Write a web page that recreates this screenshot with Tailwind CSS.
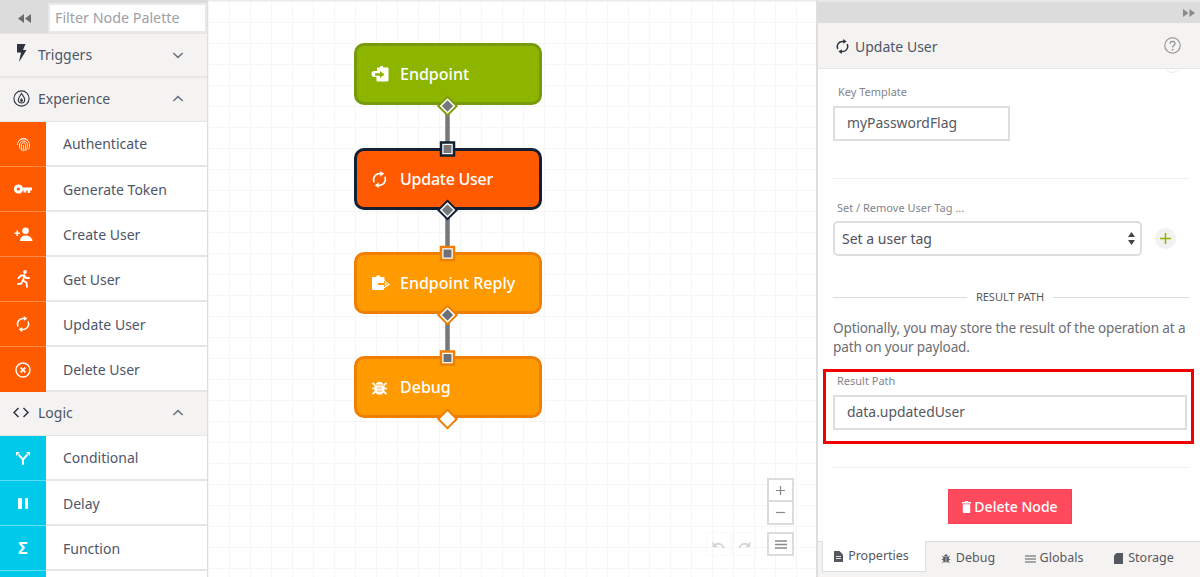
<!DOCTYPE html>
<html>
<head>
<meta charset="utf-8">
<script src="https://cdn.jsdelivr.net/npm/@tailwindcss/browser@4"></script>
</head>
<body class="w-[1200px] h-[577px] overflow-hidden bg-white font-['Noto_Sans','Open_Sans',sans-serif] text-[#4d5668]">
<svg class="hidden">
  <defs>
    <symbol id="sync" viewBox="0 0 20 20"><g fill="none" stroke="currentColor" stroke-width="2" stroke-linecap="round"><path d="M3.400 12.500A6.900 6.900 0 0 1 10 3.200h1.500"/><path d="M16.600 7.500A6.900 6.900 0 0 1 10 16.800H8.500"/></g><path fill="currentColor" d="M11 0 15.500 3.200 11 6.400zM9 13.600 4.500 16.800 9 20z"/></symbol>
    <symbol id="bug" viewBox="0 0 1792 1792"><path fill="currentColor" d="M1696 960q0 26-19 45t-45 19h-224q0 171-67 290l208 209q19 19 19 45t-19 45q-18 19-45 19t-45-19l-198-197q-5 5-15 13t-42 28.5-65 36.5-82 29-97 13v-896h-128v896q-51 0-101.5-13.5t-87-33-66-39-43.5-32.5l-15-14-183 207q-20 21-48 21-24 0-43-16-19-18-20.5-44.5t15.5-46.5l202-227q-58-114-58-274h-224q-26 0-45-19t-19-45 19-45 45-19h224v-294l-173-173q-19-19-19-45t19-45 45-19 45 19l173 173h844l173-173q19-19 45-19t45 19 19 45-19 45l-173 173v294h224q26 0 45 19t19 45zm-480-576h-640q0-133 93.5-226.5t226.5-93.5 226.5 93.5 93.5 226.5z"/></symbol>
    <symbol id="up" viewBox="0 0 14 8"><path d="M1.500 7 7 1.800 12.500 7" fill="none" stroke="currentColor" stroke-width="1.700"/></symbol>
    <symbol id="undo" viewBox="0 0 14 10"><path d="M13 9C11.500 5 7.500 3 3.500 5" fill="none" stroke="currentColor" stroke-width="2"/><path fill="currentColor" d="M0 1.500 6.500 8H.5z"/></symbol>
  </defs>
</svg>
<div class="flex h-[577px] w-[1200px]">
  <!-- Palette -->
  <aside class="w-[208px] shrink-0 h-full overflow-hidden border-r border-[#dedede] bg-white flex flex-col">
    <div class="h-[34px] shrink-0 flex bg-[#dcdcdc] pt-[3px] border-b border-[#e4e4e4]">
      <div class="w-[48px] flex items-center justify-center text-[#6b6b6b]">
        <svg width="13" height="9" viewBox="0 0 13 9"><path fill="currentColor" d="M6 0v9L0 4.500zM13 0v9L7 4.500z"/></svg>
      </div>
      <div class="w-[159px] h-[30px] bg-white border-2 border-[#e9e9e9] flex items-center pl-[5px] text-[14.3px] text-[#a0a0a4]">Filter Node Palette</div>
    </div>
    <div class="h-[44px] shrink-0 bg-[#f4f3f2] border-b-2 border-[#e6e6e6] flex items-center pl-[16px] pr-[23px]">
      <svg width="11" height="18" viewBox="0 0 11 18" class="text-[#2d3340] mr-[11px] -mt-[4px]"><path fill="currentColor" d="M1 0h8.500L7 6h3.500L3 18l2-9.500H1z"/></svg>
      <span class="text-[14px] flex-1 -mt-[1px]">Triggers</span>
      <svg width="12" height="7" viewBox="0 0 14 8" class="rotate-180 text-[#6a7280]"><use href="#up"/></svg>
    </div>
    <div class="h-[44px] shrink-0 bg-[#f4f3f2] border-b border-[#e6e6e6] flex items-center pl-[13px] pr-[23px] pb-[2px]">
      <svg width="17" height="17" viewBox="0 0 17 17" class="text-[#2d3340] mr-[8px]"><circle cx="8.500" cy="8.500" r="7.600" fill="none" stroke="currentColor" stroke-width="1.100"/><path fill="none" stroke="currentColor" stroke-width="1.100" d="M8.500 3.500C10 6 11.700 7.500 11.700 9.800a3.200 3.200 0 0 1-6.400 0C5.300 7.500 7.300 6 8.500 3.500z"/><path fill="currentColor" d="M8.500 8c.8 1 1.400 1.700 1.400 2.500a1.400 1.400 0 0 1-2.800 0C7.100 9.700 7.800 9 8.500 8z"/></svg>
      <span class="text-[14px] flex-1">Experience</span>
      <svg width="12" height="7" viewBox="0 0 14 8" class="text-[#6a7280]"><use href="#up"/></svg>
    </div>
    <!-- rows -->
    <div class="h-[45px] shrink-0 flex">
      <div class="w-[46px] bg-[#ff5a00] border-b border-[#ff8c4d] flex items-center justify-center text-[#ffe4d2]">
        <svg width="15" height="16" viewBox="0 0 15 16" fill="none" stroke="currentColor" stroke-width="1"><path d="M2.500 5.500a5.500 5.500 0 0 1 10 0M1.500 9c0-3.500 2.500-6 6-6s6 2.500 6 6c0 2-.2 3-.8 4.300M4 12.800C3.500 11.500 3.500 10 3.500 9c0-2.300 1.700-4 4-4s4 1.700 4 4c0 2-.3 3.800-1.200 5.500M5.800 14.600c-.5-1.500-.5-3.600-.5-5.600 0-1.200 1-2.200 2.200-2.200S9.700 7.800 9.700 9c0 2-.3 4-1 6M7.500 9c0 2.200-.1 4.200-.5 6.300"/></svg>
      </div>
      <div class="flex-1 flex items-center pl-[17px] text-[14px] border-b-2 border-[#e6e6e6]">Authenticate</div>
    </div>
    <div class="h-[45px] shrink-0 flex">
      <div class="w-[46px] bg-[#ff5a00] border-b border-[#ff8c4d] flex items-center justify-center text-white">
        <svg width="18" height="10" viewBox="0 0 18 10"><path fill="currentColor" fill-rule="evenodd" d="M4.500.5A4.500 4.500 0 0 1 8.800 3.600H18v2.800h-1.800V9h-2.600V6.400h-1.400V8.500H9.600V6.400h-.8A4.500 4.500 0 1 1 4.500.5zm-.2 2.900a1.600 1.600 0 1 0 0 3.200 1.600 1.600 0 0 0 0-3.200z"/></svg>
      </div>
      <div class="flex-1 flex items-center pl-[17px] pt-[2px] text-[14px] border-b-2 border-[#e6e6e6]">Generate Token</div>
    </div>
    <div class="h-[45px] shrink-0 flex">
      <div class="w-[46px] bg-[#ff5a00] border-b border-[#ff8c4d] flex items-center justify-center text-white">
        <svg width="19" height="14" viewBox="0 0 19 14"><path fill="currentColor" d="M2.500 3.600h1.500v2H6v1.500H4v2H2.500v-2H.5V5.600h2z"/><circle cx="11.500" cy="3.700" r="3.300" fill="currentColor"/><path fill="currentColor" d="M6 14c0-3.500 2.500-5.500 5.500-5.500S18.500 10.500 18.500 14z"/></svg>
      </div>
      <div class="flex-1 flex items-center pl-[17px] pt-[2px] text-[14px] border-b-2 border-[#e6e6e6]">Create User</div>
    </div>
    <div class="h-[45px] shrink-0 flex">
      <div class="w-[46px] bg-[#ff5a00] border-b border-[#ff8c4d] flex items-center justify-center text-white">
        <svg width="13" height="18" viewBox="0 0 13 18"><circle cx="8" cy="2" r="1.900" fill="currentColor"/><path fill="none" stroke="currentColor" stroke-width="1.800" stroke-linejoin="round" stroke-linecap="round" d="M1.500 8 4 5.500h3.500L6 10.500l3.500 2 .5 4.500M7.500 5.500l1.500 2.500h3M5.500 11l-1 2.500-3.500.5"/></svg>
      </div>
      <div class="flex-1 flex items-center pl-[17px] pt-[2px] text-[14px] border-b-2 border-[#e6e6e6]">Get User</div>
    </div>
    <div class="h-[45px] shrink-0 flex">
      <div class="w-[46px] bg-[#ff5a00] border-b border-[#ff8c4d] flex items-center justify-center text-white">
        <svg width="16" height="16" viewBox="0 0 20 20"><use href="#sync"/></svg>
      </div>
      <div class="flex-1 flex items-center pl-[17px] pt-[2px] text-[14px] border-b-2 border-[#e6e6e6]">Update User</div>
    </div>
    <div class="h-[45px] shrink-0 flex">
      <div class="w-[46px] bg-[#ff5a00] flex items-center justify-center text-white">
        <svg width="16" height="16" viewBox="0 0 16 16" fill="none" stroke="currentColor"><circle cx="8" cy="8" r="7" stroke-width="1.400"/><path stroke-width="1.800" d="M5.700 5.700l4.600 4.600M10.300 5.700l-4.600 4.600"/></svg>
      </div>
      <div class="flex-1 flex items-center pl-[17px] pt-[2px] text-[14px] border-b-2 border-[#e6e6e6]">Delete User</div>
    </div>
    <div class="h-[44px] shrink-0 bg-[#f4f3f2] border-b border-[#e6e6e6] flex items-center pl-[13px] pr-[23px] pb-[2px]">
      <svg width="16" height="11" viewBox="0 0 16 11" fill="none" stroke="#2d3340" stroke-width="1.500" class="mr-[9px]"><path d="M5.500 1 1 5.500 5.500 10M10.500 1 15 5.500 10.500 10"/></svg>
      <span class="text-[14px] flex-1">Logic</span>
      <svg width="12" height="7" viewBox="0 0 14 8" class="text-[#6a7280]"><use href="#up"/></svg>
    </div>
    <div class="h-[45px] shrink-0 flex">
      <div class="w-[46px] bg-[#00c9ea] border-b border-[#5adef3] flex items-center justify-center text-white">
        <svg width="14" height="13" viewBox="0 0 14 13" fill="none" stroke="currentColor" stroke-width="1.900"><path d="M7 13V7.500L2.500 2.500M7 7.500l4.500-5"/><path fill="currentColor" stroke="none" d="M0 0h4L0 4zM14 0h-4l4 4z"/></svg>
      </div>
      <div class="flex-1 flex items-center pl-[17px] text-[14px] border-b-2 border-[#e6e6e6]">Conditional</div>
    </div>
    <div class="h-[45px] shrink-0 flex">
      <div class="w-[46px] bg-[#00c9ea] border-b border-[#5adef3] flex items-center justify-center gap-[3px]">
        <div class="w-[3.500px] h-[11px] bg-white rounded-[1px]"></div><div class="w-[3.500px] h-[11px] bg-white rounded-[1px]"></div>
      </div>
      <div class="flex-1 flex items-center pl-[17px] pt-[2px] text-[14px] border-b-2 border-[#e6e6e6]">Delay</div>
    </div>
    <div class="h-[45px] shrink-0 flex">
      <div class="w-[46px] bg-[#00c9ea] border-b border-[#5adef3] flex items-center justify-center text-white text-[16px] font-bold">Σ</div>
      <div class="flex-1 flex items-center pl-[17px] pt-[2px] text-[14px] border-b-2 border-[#e6e6e6]">Function</div>
    </div>
    <div class="h-[10px] shrink-0 flex"><div class="w-[46px] bg-[#00c9ea]"></div></div>
  </aside>

  <!-- Canvas -->
  <main class="relative w-[608px] shrink-0 h-full border-t border-[#e8e8e8] bg-[linear-gradient(#f6f6f6_1px,transparent_1px),linear-gradient(90deg,#f6f6f6_1px,transparent_1px)] bg-[size:21px_21px]">
    <svg class="absolute left-0 top-0" width="608" height="577" viewBox="208 0 608 577">
      <path d="M447.500 105V148M447.500 210V252M447.500 314V356" stroke="#76787d" stroke-width="4.500"/>
    </svg>
    <!-- Endpoint -->
    <div class="absolute left-[146px] top-[42px] w-[188px] h-[62px] rounded-[10px] bg-[#8db500] border-[3px] border-[#779a0c] flex items-center pl-[13px] text-white">
      <svg width="18" height="16" viewBox="0 0 18 16" class="shrink-0 w-[18px] ml-[1px]"><path fill="currentColor" d="M6 3V1.500h3.500V0H12v1.500h4.500a1 1 0 0 1 1 1v12a1 1 0 0 1-1 1H6.500a1 1 0 0 1-1-1V11H3.500a3 3 0 0 1 0-6H6z"/><path fill="#8db500" d="M4 7.300h5V5l4.500 3.500L9 12V9.700H4z"/></svg>
      <span class="ml-[11px] text-[16px] font-medium">Endpoint</span>
    </div>
    <!-- Update User -->
    <div class="absolute left-[146px] top-[147px] w-[188px] h-[62px] rounded-[10px] bg-[#ff5a00] border-[3px] border-[#131f33] flex items-center pl-[14px] text-white">
      <svg width="17" height="17" viewBox="0 0 20 20" class="shrink-0"><use href="#sync"/></svg>
      <span class="ml-[12px] text-[16px] font-medium tracking-[-0.25px]">Update User</span>
    </div>
    <!-- Endpoint Reply -->
    <div class="absolute left-[146px] top-[251px] w-[188px] h-[62px] rounded-[10px] bg-[#ff9a00] border-[3px] border-[#ee7f00] flex items-center pl-[15px] text-white">
      <svg width="18" height="16" viewBox="0 0 18 16" class="shrink-0"><path fill="currentColor" d="M1 2h3.500V.5H8V2h3.500a1 1 0 0 1 1 1v2.500L12 5 18 9.500 12 13.500v-1.400V14a1 1 0 0 1-1 1H1a1 1 0 0 1-1-1V3a1 1 0 0 1 1-1z"/><path fill="#ff9a00" d="M6 8h6V5.800l4.300 3.200L12 12V10H6z"/><path fill="currentColor" d="M12.800 7.100 15 9l-2.200 1.700z"/></svg>
      <span class="ml-[10px] text-[16px] font-medium">Endpoint Reply</span>
    </div>
    <!-- Debug -->
    <div class="absolute left-[146px] top-[355px] w-[188px] h-[62px] rounded-[10px] bg-[#ff9a00] border-[3px] border-[#ee7f00] flex items-center pl-[15px] text-white">
      <svg width="15" height="15" viewBox="0 0 15 15" class="shrink-0"><ellipse cx="7.500" cy="8.300" rx="5.200" ry="6.500" fill="currentColor"/><path stroke="currentColor" stroke-width="1.700" d="M.5 3 3.500 5.500M14.500 3 11.500 5.500M0 8.500h3M15 8.500h-3M.5 14l3-2.500M14.500 14l-3-2.500"/><path stroke="#ff9a00" stroke-width=".8" d="M3 5h9M5 8h5M5 11h5"/></svg>
      <span class="ml-[13px] text-[16px] font-medium">Debug</span>
    </div>
    <!-- ports -->
    <svg class="absolute left-0 top-0 pointer-events-none" width="608" height="577" viewBox="208 0 608 577">
      <g transform="translate(447.500 105)"><rect x="-6.500" y="-6.500" width="13" height="13" transform="rotate(45)" fill="#fff" stroke="#7d9c10" stroke-width="2"/><rect x="-4" y="-4" width="8" height="8" transform="rotate(45)" fill="#76787d"/></g>
      <g transform="translate(447.500 148)"><rect x="-6.500" y="-6.500" width="13" height="13" fill="#fff" stroke="#131f33" stroke-width="2.500"/><rect x="-4" y="-4" width="8" height="8" fill="#76787d"/></g>
      <g transform="translate(447.500 209)"><rect x="-6.500" y="-6.500" width="13" height="13" transform="rotate(45)" fill="#fff" stroke="#131f33" stroke-width="2"/><rect x="-4" y="-4" width="8" height="8" transform="rotate(45)" fill="#76787d"/></g>
      <g transform="translate(447.500 252.500)"><rect x="-6.500" y="-6.500" width="13" height="13" fill="#fff" stroke="#ee7f00" stroke-width="2.500"/><rect x="-4" y="-4" width="8" height="8" fill="#6e7077"/></g>
      <g transform="translate(447.500 314)"><rect x="-6.500" y="-6.500" width="13" height="13" transform="rotate(45)" fill="#fff" stroke="#ee7f00" stroke-width="2"/><rect x="-4" y="-4" width="8" height="8" transform="rotate(45)" fill="#6e7077"/></g>
      <g transform="translate(447.500 357)"><rect x="-6.500" y="-6.500" width="13" height="13" fill="#fff" stroke="#ee7f00" stroke-width="2.500"/><rect x="-4" y="-4" width="8" height="8" fill="#6e7077"/></g>
      <g transform="translate(447.500 418)"><rect x="-6.500" y="-6.500" width="13" height="13" transform="rotate(45)" fill="#fff" stroke="#ee7f00" stroke-width="2"/></g>
    </svg>
    <!-- zoom controls -->
    <div class="absolute left-[559px] top-[477px] w-[27px] h-[47px] border-2 border-[#dcdcdc] bg-white flex flex-col text-[#8a8a8a]">
      <div class="h-[22px] flex items-center justify-center border-b-2 border-[#dcdcdc]">
        <svg width="11" height="11" viewBox="0 0 11 11"><path d="M5.500 1v9M1 5.500h9" stroke="currentColor" stroke-width="1.200"/></svg>
      </div>
      <div class="flex-1 flex items-center justify-center">
        <svg width="11" height="3" viewBox="0 0 11 3"><path d="M1 1.500h9" stroke="currentColor" stroke-width="1.200"/></svg>
      </div>
    </div>
    <div class="absolute left-[498px] top-[531px] w-[25px] h-[24px] border border-[#f8f8f8] flex items-center justify-center text-[#d4d4d4]">
      <svg width="13" height="9" viewBox="0 0 14 10"><use href="#undo"/></svg>
    </div>
    <div class="absolute left-[524px] top-[531px] w-[25px] h-[24px] border border-[#f8f8f8] flex items-center justify-center text-[#d4d4d4]">
      <svg width="13" height="9" viewBox="0 0 14 10" class="-scale-x-100"><use href="#undo"/></svg>
    </div>
    <div class="absolute left-[559px] top-[531px] w-[27px] h-[24px] border-2 border-[#dcdcdc] bg-white flex items-center justify-center">
      <svg width="12" height="9" viewBox="0 0 12 9"><path d="M0 1h12M0 4.500h12M0 8h12" stroke="#8a8a8a" stroke-width="1.300"/></svg>
    </div>
  </main>

  <!-- Right panel -->
  <aside class="w-[384px] shrink-0 h-full border-l-2 border-[#dedede] flex flex-col bg-white">
    <div class="h-[23px] shrink-0 bg-[#dcdcdc] border-t-2 border-[#e8e8e8] flex items-center justify-end pr-[5px] text-[#8a8a8a]">
      <svg width="12" height="8" viewBox="0 0 12 8"><path fill="currentColor" d="M0 0v8l5.500-4zM6.500 0v8L12 4z"/></svg>
    </div>
    <div class="h-[46px] shrink-0 bg-[#f4f3f2] border-b border-[#e6e6e6] flex items-center pl-[17px] pr-[19px] pt-[2px]">
      <svg width="15" height="15" viewBox="0 0 20 20" class="text-[#2d3340] mr-[5px]"><use href="#sync"/></svg>
      <span class="flex-1 text-[14px]">Update User</span>
      <svg width="17" height="17" viewBox="0 0 16 16" fill="none" stroke="#8f8f8f" stroke-width="1" class="-mt-[2px]"><circle cx="8" cy="8" r="7.300"/><path d="M5.700 6.300c0-3 4.600-3 4.600-.2 0 1.800-2.300 1.800-2.300 3.700" stroke-width="1.200"/><circle cx="8" cy="11.800" r=".8" fill="#8f8f8f" stroke="none"/></svg>
    </div>
    <div class="relative flex-1 min-h-0 overflow-hidden pl-[15px] pr-[11px]">
      <div class="absolute right-[19px] -top-[13px] w-[17px] h-[17px] rounded-full border border-[#ececec]"></div>
      <div class="text-[11px] text-[#82858c] pl-[5px] pt-[16px] leading-[14px]">Key Template</div>
      <div class="mt-[7px] w-[177px] h-[35px] border-2 border-[#dedede] flex items-center pl-[12px] text-[13.9px] text-[#55585f]">myPasswordFlag</div>
      <div class="mt-[37px] h-px bg-[#f0f0f0]"></div>
      <div class="mt-[22px] text-[11px] text-[#82858c] pl-[4px] leading-[14px]">Set / Remove User Tag ...</div>
      <div class="mt-[6px] flex items-center">
        <div class="w-[309px] h-[35px] rounded-[5px] border-2 border-[#dedede] flex items-center pl-[7px] pr-[5px] text-[14px] text-[#4f525a]">
          <span class="flex-1">Set a user tag</span>
          <svg width="7" height="13" viewBox="0 0 7 13"><path fill="#3f4248" d="M3.500 0 7 5H0zM3.500 13 0 8h7z"/></svg>
        </div>
        <div class="ml-[13px] w-[21px] h-[21px] rounded-full bg-[#f2f2f0] flex items-center justify-center">
          <svg width="11" height="11" viewBox="0 0 11 11"><path d="M5.500 0v11M0 5.500h11" stroke="#8db500" stroke-width="1.500"/></svg>
        </div>
      </div>
      <div class="mt-[32px] flex items-center">
        <div class="w-[134px] h-px bg-[#dcdcdc]"></div>
        <div class="w-[86px] text-center text-[11px] text-[#55585f] leading-[18px]">RESULT PATH</div>
        <div class="flex-1 h-px bg-[#dcdcdc]"></div>
      </div>
      <p class="mt-[12px] text-[13.6px] tracking-[-0.15px] leading-[19px] text-[#6b6e74]">Optionally, you may store the result of the operation at a path on your payload.</p>
      <div class="-ml-[10px] -mr-[5px] mt-[13px] h-[75px] border-[3px] border-[#f00000] pl-[7px] pr-[4px] pt-[2px]">
        <div class="text-[11px] text-[#82858c] pl-[4px] leading-[14px]">Result Path</div>
        <div class="mt-[7px] h-[35px] border-2 border-[#dedede] flex items-center pl-[12px] text-[13.9px] text-[#55585f]">data.updatedUser</div>
      </div>
      <div class="mt-[23px] h-px bg-[#f0f0f0]"></div>
      <div class="mt-[21px] flex justify-center -ml-[2px]">
        <div class="w-[124px] h-[35px] bg-[#ff4a5e] border border-[#f54055] flex items-center justify-center text-white text-[14px] font-medium">
          <svg width="9" height="12" viewBox="0 0 9 12" class="mr-[3px]"><path fill="currentColor" d="M3 0h3l.5 1H9v1.500H0V1h2.500zM.8 3.300h7.400V11a1 1 0 0 1-1 1H1.800a1 1 0 0 1-1-1z"/></svg>
          Delete Node
        </div>
      </div>
    </div>
    <div class="h-[36px] shrink-0 relative bg-[#f4f3f2] border-t border-[#dedede] flex text-[12.5px] text-[#55585f]">
      <div class="ml-[4px] w-[104px] h-[31px] -mt-px bg-white border-l border-b border-r border-[#dedede] flex items-center justify-center pr-[5px]">
        <svg width="9" height="11" viewBox="0 0 9 11" class="mr-[5px]"><path fill="#55585f" d="M0 0h5.500L9 3.500V11H0z"/><path stroke="#fff" stroke-width=".8" d="M2 5.500h5M2 7.500h5"/></svg>Properties
      </div>
      <div class="w-[84px] flex items-center justify-center pb-[2px]">
        <svg width="10" height="10" viewBox="0 0 1792 1792" class="mr-[5px]"><use href="#bug"/></svg>Debug
      </div>
      <div class="w-[88px] flex items-center justify-center pb-[2px]">
        <svg width="11" height="8" viewBox="0 0 11 8" class="mr-[4px]"><path d="M0 1h11M0 4h11M0 7h11" stroke="#55585f"/></svg>Globals
      </div>
      <div class="w-[92px] flex items-center justify-center pb-[2px]">
        <svg width="9" height="11" viewBox="0 0 9 11" class="mr-[5px]"><path fill="#55585f" d="M2.500 0H9v11H0V2.500z"/></svg>Storage
      </div>
    </div>
  </aside>
</div>
</body>
</html>
